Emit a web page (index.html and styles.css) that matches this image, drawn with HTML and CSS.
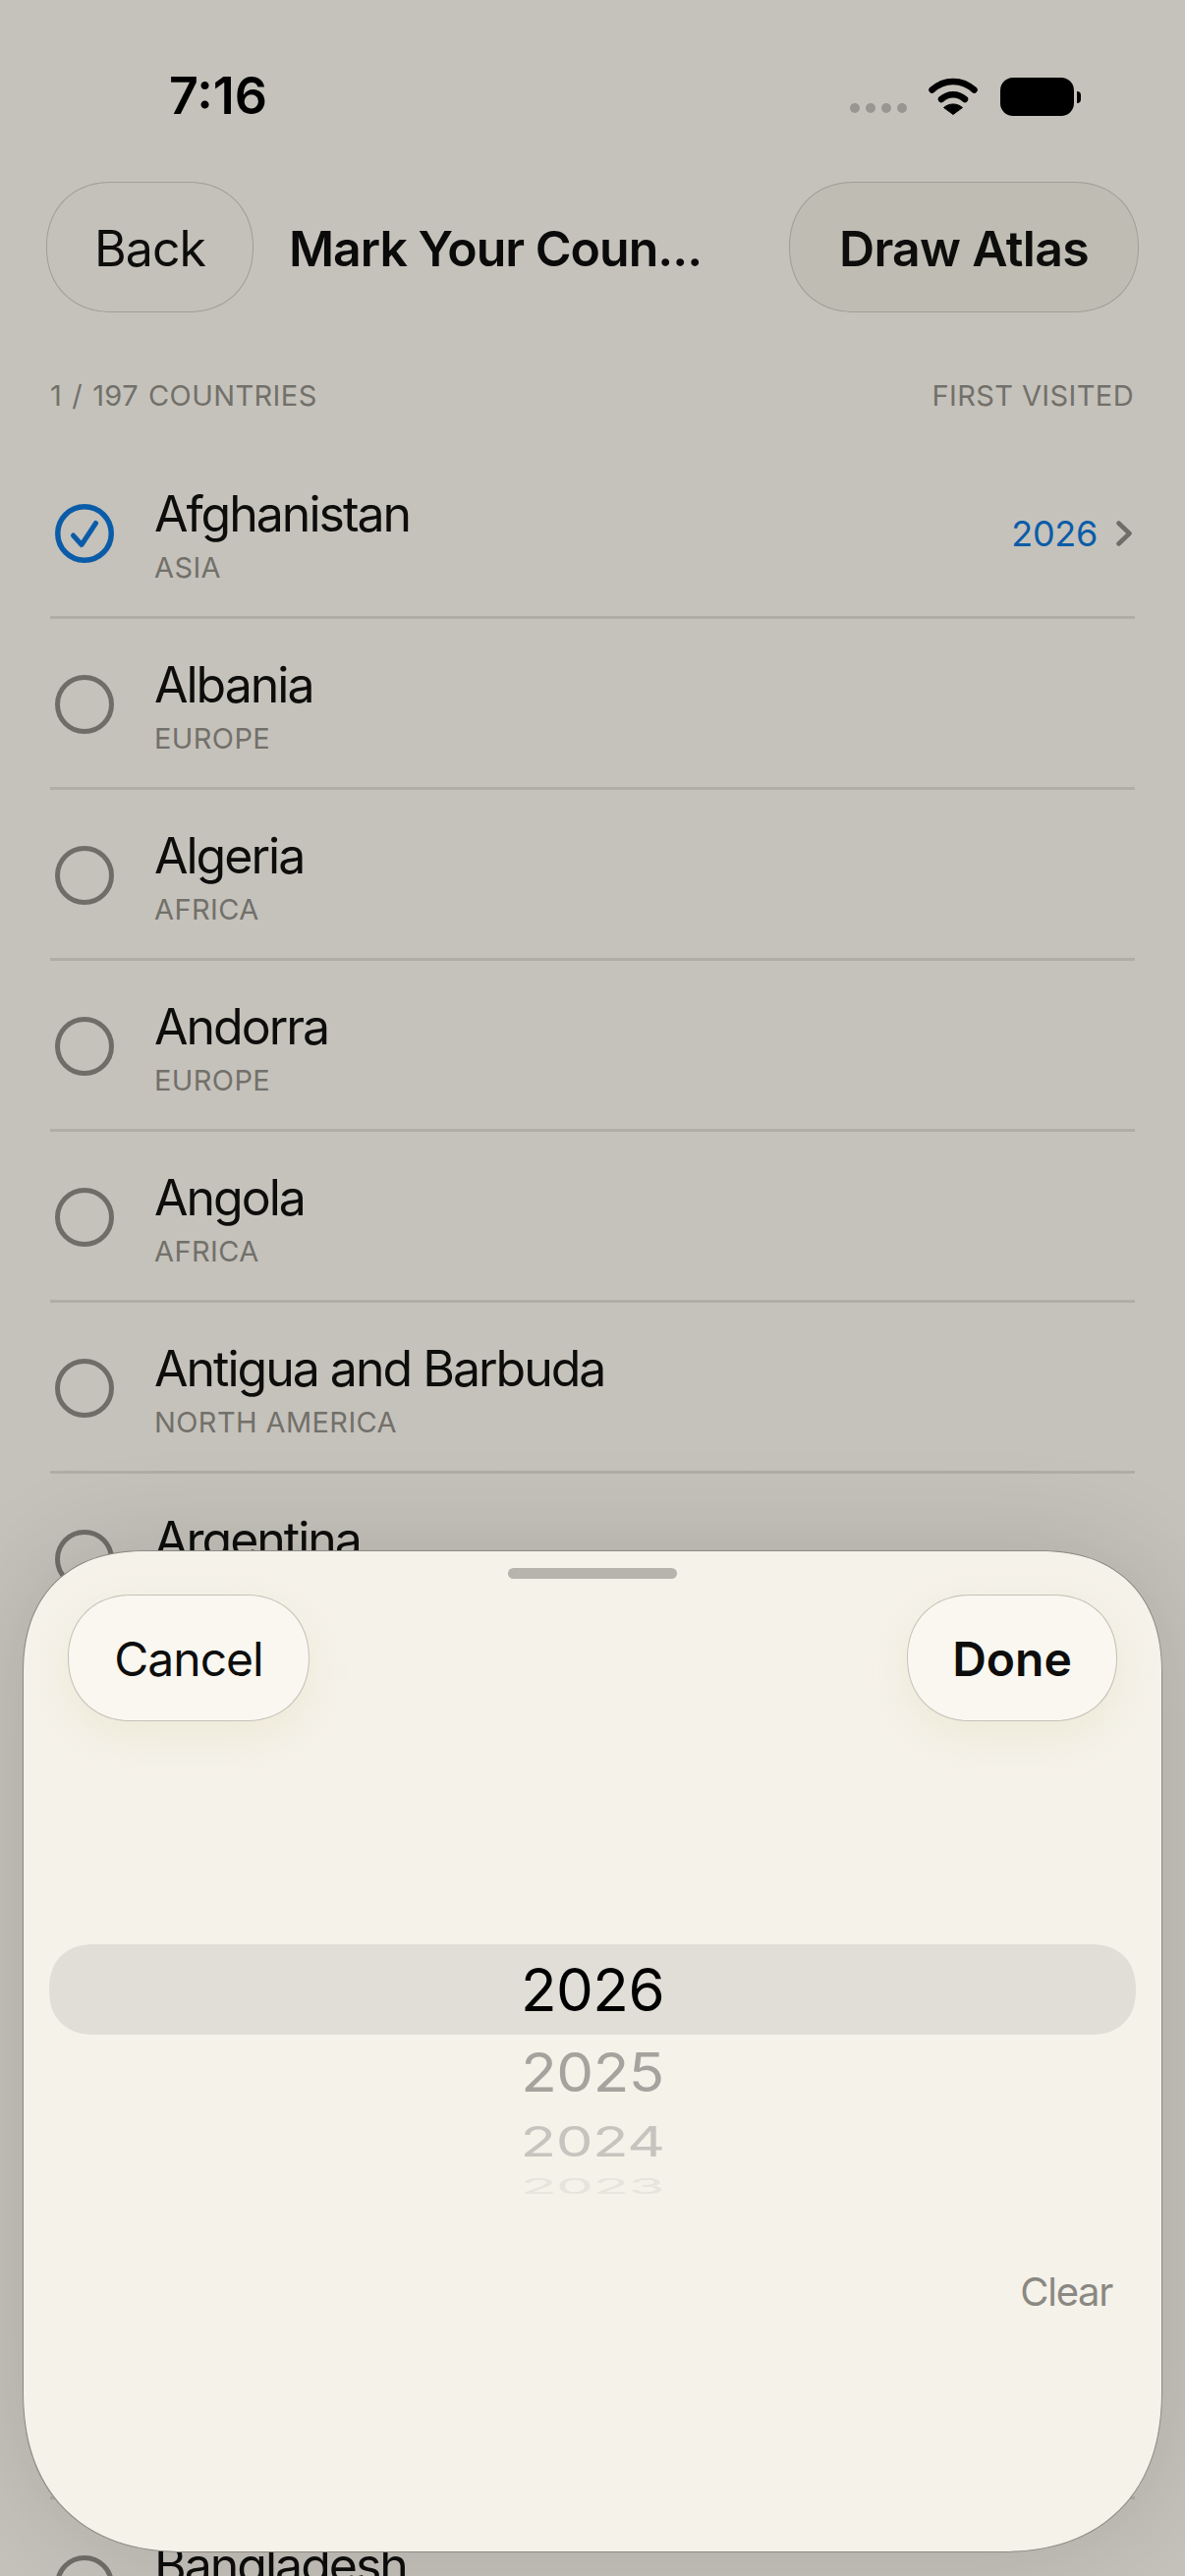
FILE: index.html
```html
<!DOCTYPE html>
<html lang="en">
<head>
<meta charset="utf-8">
<title>Mark Your Countries</title>
<link rel="stylesheet" href="styles.css">
</head>
<body>
<div class="screen">
  <div class="status">
    <span class="time">7:16</span>
    <div class="status-icons">
      <div class="signal"><i></i><i></i><i></i><i></i></div>
      <svg class="wifi" width="50" height="38" viewBox="0 0 50 38"><path d="M3.5 12.5C16 1 34 1 46.500 12.500" fill="none" stroke="#000" stroke-width="6.500" stroke-linecap="round"/><path d="M13 22C20 15.500 30 15.500 37 22" fill="none" stroke="#000" stroke-width="6.500" stroke-linecap="round"/><path d="M25 37.500L15.500 30.500C21 25.800 29 25.800 34.500 30.500Z" fill="#000" stroke="#000" stroke-width="1" stroke-linejoin="round"/></svg>
      <div class="battery"><div class="battery-body"></div><div class="battery-nub"></div></div>
    </div>
  </div>
  <header class="topbar">
    <button class="pill back">Back</button>
    <h1 class="title">Mark Your Coun...</h1>
    <button class="pill draw">Draw Atlas</button>
  </header>
  <div class="labels"><span class="count">1 / 197 COUNTRIES</span><span>FIRST VISITED</span></div>
  <ul class="list">
    <li class="row">
      <svg class="mark" width="60" height="60" viewBox="0 0 60 60"><circle cx="30" cy="30" r="27.250" fill="none" stroke="#0b5ca8" stroke-width="5.500"/><path d="M18.500 32L27 41.500L41.500 19.500" fill="none" stroke="#0b5ca8" stroke-width="5" stroke-linecap="round" stroke-linejoin="round"/></svg>
      <div class="info"><div class="name">Afghanistan</div><div class="region">ASIA</div></div>
      <span class="year">2026</span>
      <svg class="chev" width="16" height="26" viewBox="0 0 16 26"><path d="M2.500 2.500L13.500 13L2.500 23.500" fill="none" stroke="#6f6d68" stroke-width="4.500" stroke-linecap="round" stroke-linejoin="round"/></svg>
    </li>
    <li class="row"><div class="ring"></div><div class="info"><div class="name">Albania</div><div class="region">EUROPE</div></div></li>
    <li class="row"><div class="ring"></div><div class="info"><div class="name">Algeria</div><div class="region">AFRICA</div></div></li>
    <li class="row"><div class="ring"></div><div class="info"><div class="name">Andorra</div><div class="region">EUROPE</div></div></li>
    <li class="row"><div class="ring"></div><div class="info"><div class="name">Angola</div><div class="region">AFRICA</div></div></li>
    <li class="row"><div class="ring"></div><div class="info"><div class="name">Antigua and Barbuda</div><div class="region">NORTH AMERICA</div></div></li>
    <li class="row"><div class="ring"></div><div class="info"><div class="name">Argentina</div><div class="region">SOUTH AMERICA</div></div></li>
    <li class="row"><div class="ring"></div><div class="info"><div class="name">Armenia</div><div class="region">ASIA</div></div></li>
    <li class="row"><div class="ring"></div><div class="info"><div class="name">Australia</div><div class="region">OCEANIA</div></div></li>
    <li class="row"><div class="ring"></div><div class="info"><div class="name">Austria</div><div class="region">EUROPE</div></div></li>
    <li class="row"><div class="ring"></div><div class="info"><div class="name">Azerbaijan</div><div class="region">ASIA</div></div></li>
    <li class="row"><div class="ring"></div><div class="info"><div class="name">Bahrain</div><div class="region">ASIA</div></div></li>
    <li class="row"><div class="ring"></div><div class="info"><div class="name">Bangladesh</div><div class="region">ASIA</div></div></li>
  </ul>
  <section class="sheet">
    <div class="handle"></div>
    <div class="sheet-actions">
      <button class="pill light cancel">Cancel</button>
      <button class="pill light done">Done</button>
    </div>
    <div class="wheel">
      <div class="wheel-item current">2026</div>
      <div class="wheel-item y1"><span>2025</span></div>
      <div class="wheel-item y2"><span>2024</span></div>
      <div class="wheel-item y3"><span>2023</span></div>
    </div>
    <div class="clear-row"><span class="clear">Clear</span></div>
  </section>
</div>
</body>
</html>
```
FILE: styles.css
```css
* { box-sizing: border-box; }
html, body { margin: 0; padding: 0; }
body {
  width: 1206px;
  height: 2622px;
  overflow: hidden;
  background: #c5c2bb;
  font-family: Inter, "Liberation Sans", sans-serif;
  color: #0d0d0c;
}
.screen {
  position: relative;
  width: 1206px;
  height: 2622px;
  overflow: hidden;
  background: #c5c2bb;
}
.status {
  height: 185px;
  padding: 68px 106px 0 172px;
  display: flex;
  justify-content: space-between;
  align-items: flex-start;
}
.time {
  font-size: 52px;
  font-weight: 600;
  line-height: 60px;
  color: #000;
}
.status-icons {
  display: flex;
  align-items: flex-start;
  padding-top: 11px;
}
.signal {
  display: flex;
  gap: 6px;
  margin-top: 26px;
  margin-right: 22px;
}
.signal i {
  width: 10px;
  height: 10px;
  border-radius: 50%;
  background: #989690;
}
.wifi { margin-right: 23px; }
.battery { display: flex; align-items: center; gap: 3px; }
.battery-body {
  width: 75px;
  height: 39px;
  border-radius: 13px;
  background: #000;
}
.battery-nub {
  width: 4px;
  height: 12px;
  border-radius: 0 5px 5px 0;
  background: #000;
}
.topbar {
  height: 133px;
  padding: 0 47px;
  display: flex;
  align-items: center;
}
.pill {
  height: 133px;
  border: 1.5px solid #a09e97;
  border-radius: 66px;
  background: #c4c1ba;
  font: 400 50px/60px Inter, "Liberation Sans", sans-serif;
  letter-spacing: -1px;
  color: #0d0d0c;
  padding: 2px 0 0;
  corner-shape: superellipse(1.1);
}
.back { width: 211px; }
.title {
  margin: 2px 0 0 36px;
  flex: 1;
  font-size: 50px;
  font-weight: 600;
  line-height: 60px;
  letter-spacing: -1px;
  color: #0a0a0a;
  white-space: nowrap;
}
.draw { width: 356px; background: #bfbcb4; font-weight: 600; letter-spacing: -0.7px; }
.labels {
  display: flex;
  justify-content: space-between;
  margin-top: 67px;
  padding: 0 52px 0 51px;
  font-size: 29px;
  line-height: 36px;
  letter-spacing: 0.4px;
  color: #72706a;
}
.count { word-spacing: 1.500px; }
.list {
  list-style: none;
  margin: 35px 0 0;
  padding: 0 51px;
}
.row {
  height: 174px;
  padding: 2px 3px 0 5px;
  display: flex;
  align-items: center;
  border-bottom: 3px solid #b0ada6;
}
.mark { flex: none; }
.ring {
  flex: none;
  width: 60px;
  height: 60px;
  border: 5.500px solid #6f6d68;
  border-radius: 50%;
}
.info { margin-left: 41px; padding-top: 3px; flex: 1; }
.name {
  font-size: 50px;
  line-height: 60px;
  letter-spacing: -2px;
  color: #0d0d0c;
}
.region {
  font-size: 29px;
  line-height: 36px;
  letter-spacing: 0.4px;
  color: #72706a;
  margin-top: 7px;
}
.year {
  font-size: 36px;
  letter-spacing: -0.3px;
  color: #0b5ca8;
  margin-right: 19px;
}
.chev { flex: none; }
.sheet {
  position: absolute;
  left: 23px;
  top: 1578px;
  width: 1160px;
  height: 1020px;
  background: #f5f2ea;
  border: 1px solid #8c8a83;
  border-radius: 125px 125px 165px 165px;
  corner-shape: superellipse(1.2);
  box-shadow: 0 0 110px rgba(0, 0, 0, 0.13);
  display: flex;
  flex-direction: column;
}
.handle {
  width: 172px;
  height: 11px;
  margin: 17px auto 0;
  border-radius: 6px;
  background: #b7b4ad;
}
.sheet-actions {
  display: flex;
  justify-content: space-between;
  margin-top: 16px;
  padding: 0 45px;
}
.pill.light {
  height: 129px;
  background: #f9f7f0;
  border: 1px solid #c4c2b9;
  font-size: 48px;
  box-shadow: 0 14px 40px rgba(228, 224, 190, 0.45);
}
.cancel { width: 246px; }
.done { width: 214px; font-weight: 600 !important; letter-spacing: 0; }
.wheel {
  margin: 227px 26px 0;
  display: flex;
  flex-direction: column;
  text-align: center;
  letter-spacing: -0.5px;
}
.wheel-item { font-size: 60px; line-height: 60px; }
.wheel-item span { display: block; }
.current {
  height: 92px;
  line-height: 92px;
  border-radius: 46px;
  corner-shape: superellipse(1.2);
  background: #e0ded7;
  color: #000;
}
.y1 { height: 76px; line-height: 76px; color: #a5a39d; }
.y1 span { transform: scaleY(0.91); }
.y2 { height: 65px; line-height: 65px; color: #c6c4be; }
.y2 span { transform: scaleY(0.7); }
.y3 { height: 26px; line-height: 26px; color: #e6e4dd; }
.y3 span { transform: scaleY(0.36); }
.clear-row {
  margin-top: 65px;
  padding-right: 50px;
  text-align: right;
}
.clear {
  font-size: 40px;
  line-height: 60px;
  letter-spacing: -1.3px;
  color: #8a8882;
}
```
